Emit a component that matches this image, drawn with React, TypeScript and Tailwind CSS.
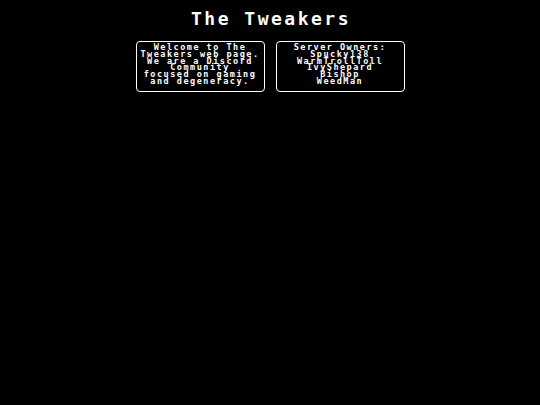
export default function App() {
  const mono = { fontFamily: '"DejaVu Sans Mono", "Liberation Mono", monospace' };
  return (
    <div className="w-[540px] h-[405px] bg-black text-white flex flex-col items-center" style={mono}>
      <h1 className="mt-[10px] text-[18px] font-bold tracking-[2.5px] leading-[18px] pl-[2px]">The Tweakers</h1>
      <div className="mt-[13px] flex gap-[11px]">
        <div className="w-[129px] h-[51px] border border-white rounded-[4px] text-center text-[8.5px] font-bold tracking-[1.5px] leading-[6.8px] pt-[2px]">
          <p>Welcome to The</p>
          <p>Tweakers web page.</p>
          <p>We are a Discord</p>
          <p>Community</p>
          <p>focused on gaming</p>
          <p>and degeneracy.</p>
        </div>
        <div className="w-[129px] h-[51px] border border-white rounded-[4px] text-center text-[8.5px] font-bold tracking-[1.5px] leading-[6.8px] pt-[2px]">
          <p>Server Owners:</p>
          <p>Spucky138</p>
          <p>WarmTrollToll</p>
          <p>IvyShepard</p>
          <p>Bishop</p>
          <p>WeedMan</p>
        </div>
      </div>
    </div>
  );
}
